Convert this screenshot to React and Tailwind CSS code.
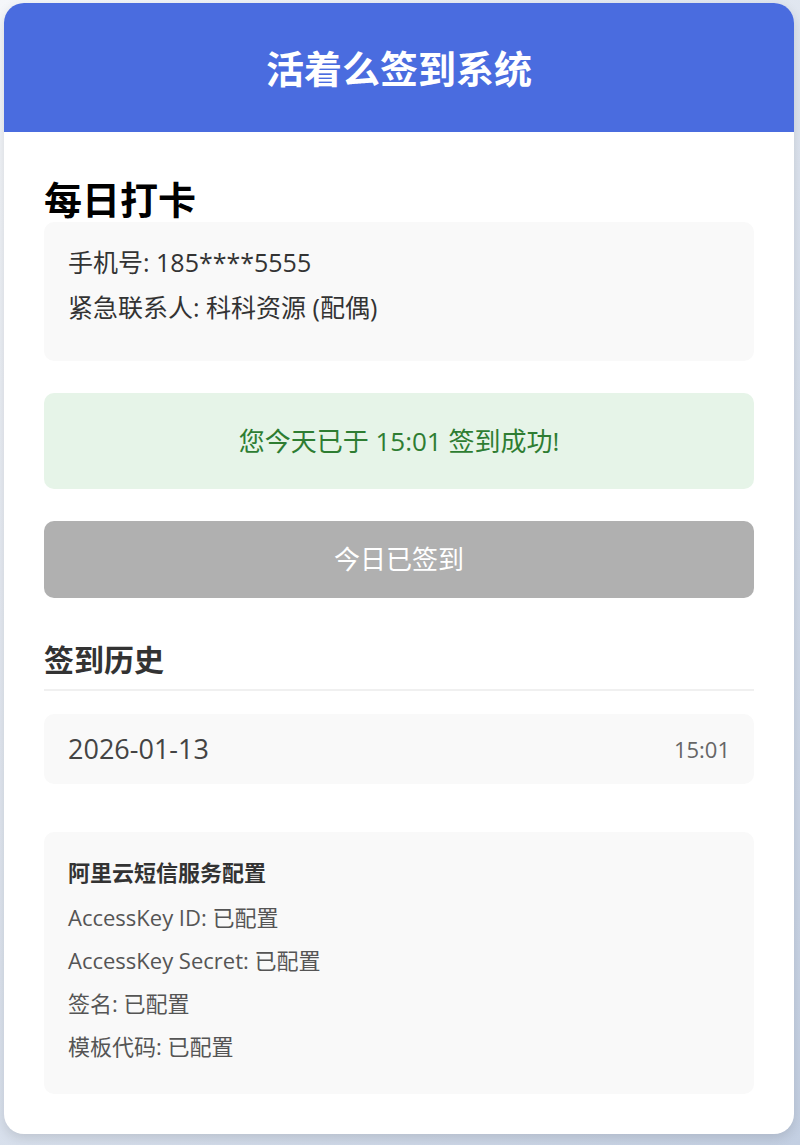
export default function App() {
  const font = { fontFamily: '"Open Sans", "Noto Sans CJK SC", sans-serif' };
  return (
    <div
      className="w-[800px] h-[1145px] overflow-hidden bg-[linear-gradient(135deg,#f5f7fa_0%,#c3cfe2_100%)] pt-[3px] pl-[4px]"
      style={font}
    >
      <div className="w-[790px] h-[1131px] rounded-[20px] bg-white shadow-[0_4px_12px_rgba(0,0,0,0.12)] overflow-hidden flex flex-col">
        <div className="h-[129px] bg-[#4a6cdf] flex items-center justify-center">
          <h1 className="text-[38px] font-bold text-white leading-none">活着么签到系统</h1>
        </div>
        <div className="px-[40px] pt-[44px]">
          <h2 className="text-[38px] font-bold text-black leading-[46px]">每日打卡</h2>
          <div className="bg-[#f9f9f9] rounded-[10px] px-[24px] pt-[18px] pb-[31px] text-[25px] text-[#333]">
            <div className="h-[45px] leading-[45px]">手机号: 185****5555</div>
            <div className="h-[45px] leading-[45px]">紧急联系人: 科科资源 (配偶)</div>
          </div>
          <div className="mt-[32px] h-[96px] rounded-[10px] bg-[#e6f4e8] flex items-center justify-center text-[26px] text-[#2e7d32]">
            您今天已于 15:01 签到成功!
          </div>
          <div className="mt-[32px] h-[77px] rounded-[10px] bg-[#b0b0b0] flex items-center justify-center text-[26px] text-white">
            今日已签到
          </div>
          <h3 className="mt-[44px] text-[30px] font-bold text-[#333] leading-[36px]">签到历史</h3>
          <div className="mt-[11px] h-[2px] bg-[#f0f0f0]"></div>
          <div className="mt-[23px] h-[70px] rounded-[10px] bg-[#f9f9f9] px-[24px] flex items-center justify-between">
            <span className="text-[27px] text-[#444]">2026-01-13</span>
            <span className="text-[22px] text-[#666]">15:01</span>
          </div>
          <div className="mt-[48px] rounded-[10px] bg-[#f9f9f9] px-[24px] pt-[18px] h-[262px] text-[22px] text-[#555]">
            <div className="h-[46px] leading-[44px] font-bold text-[#333]">阿里云短信服务配置</div>
            <div className="h-[43px] leading-[43px]">AccessKey ID: 已配置</div>
            <div className="h-[43px] leading-[43px]">AccessKey Secret: 已配置</div>
            <div className="h-[43px] leading-[43px]">签名: 已配置</div>
            <div className="h-[43px] leading-[43px]">模板代码: 已配置</div>
          </div>
        </div>
      </div>
    </div>
  );
}
